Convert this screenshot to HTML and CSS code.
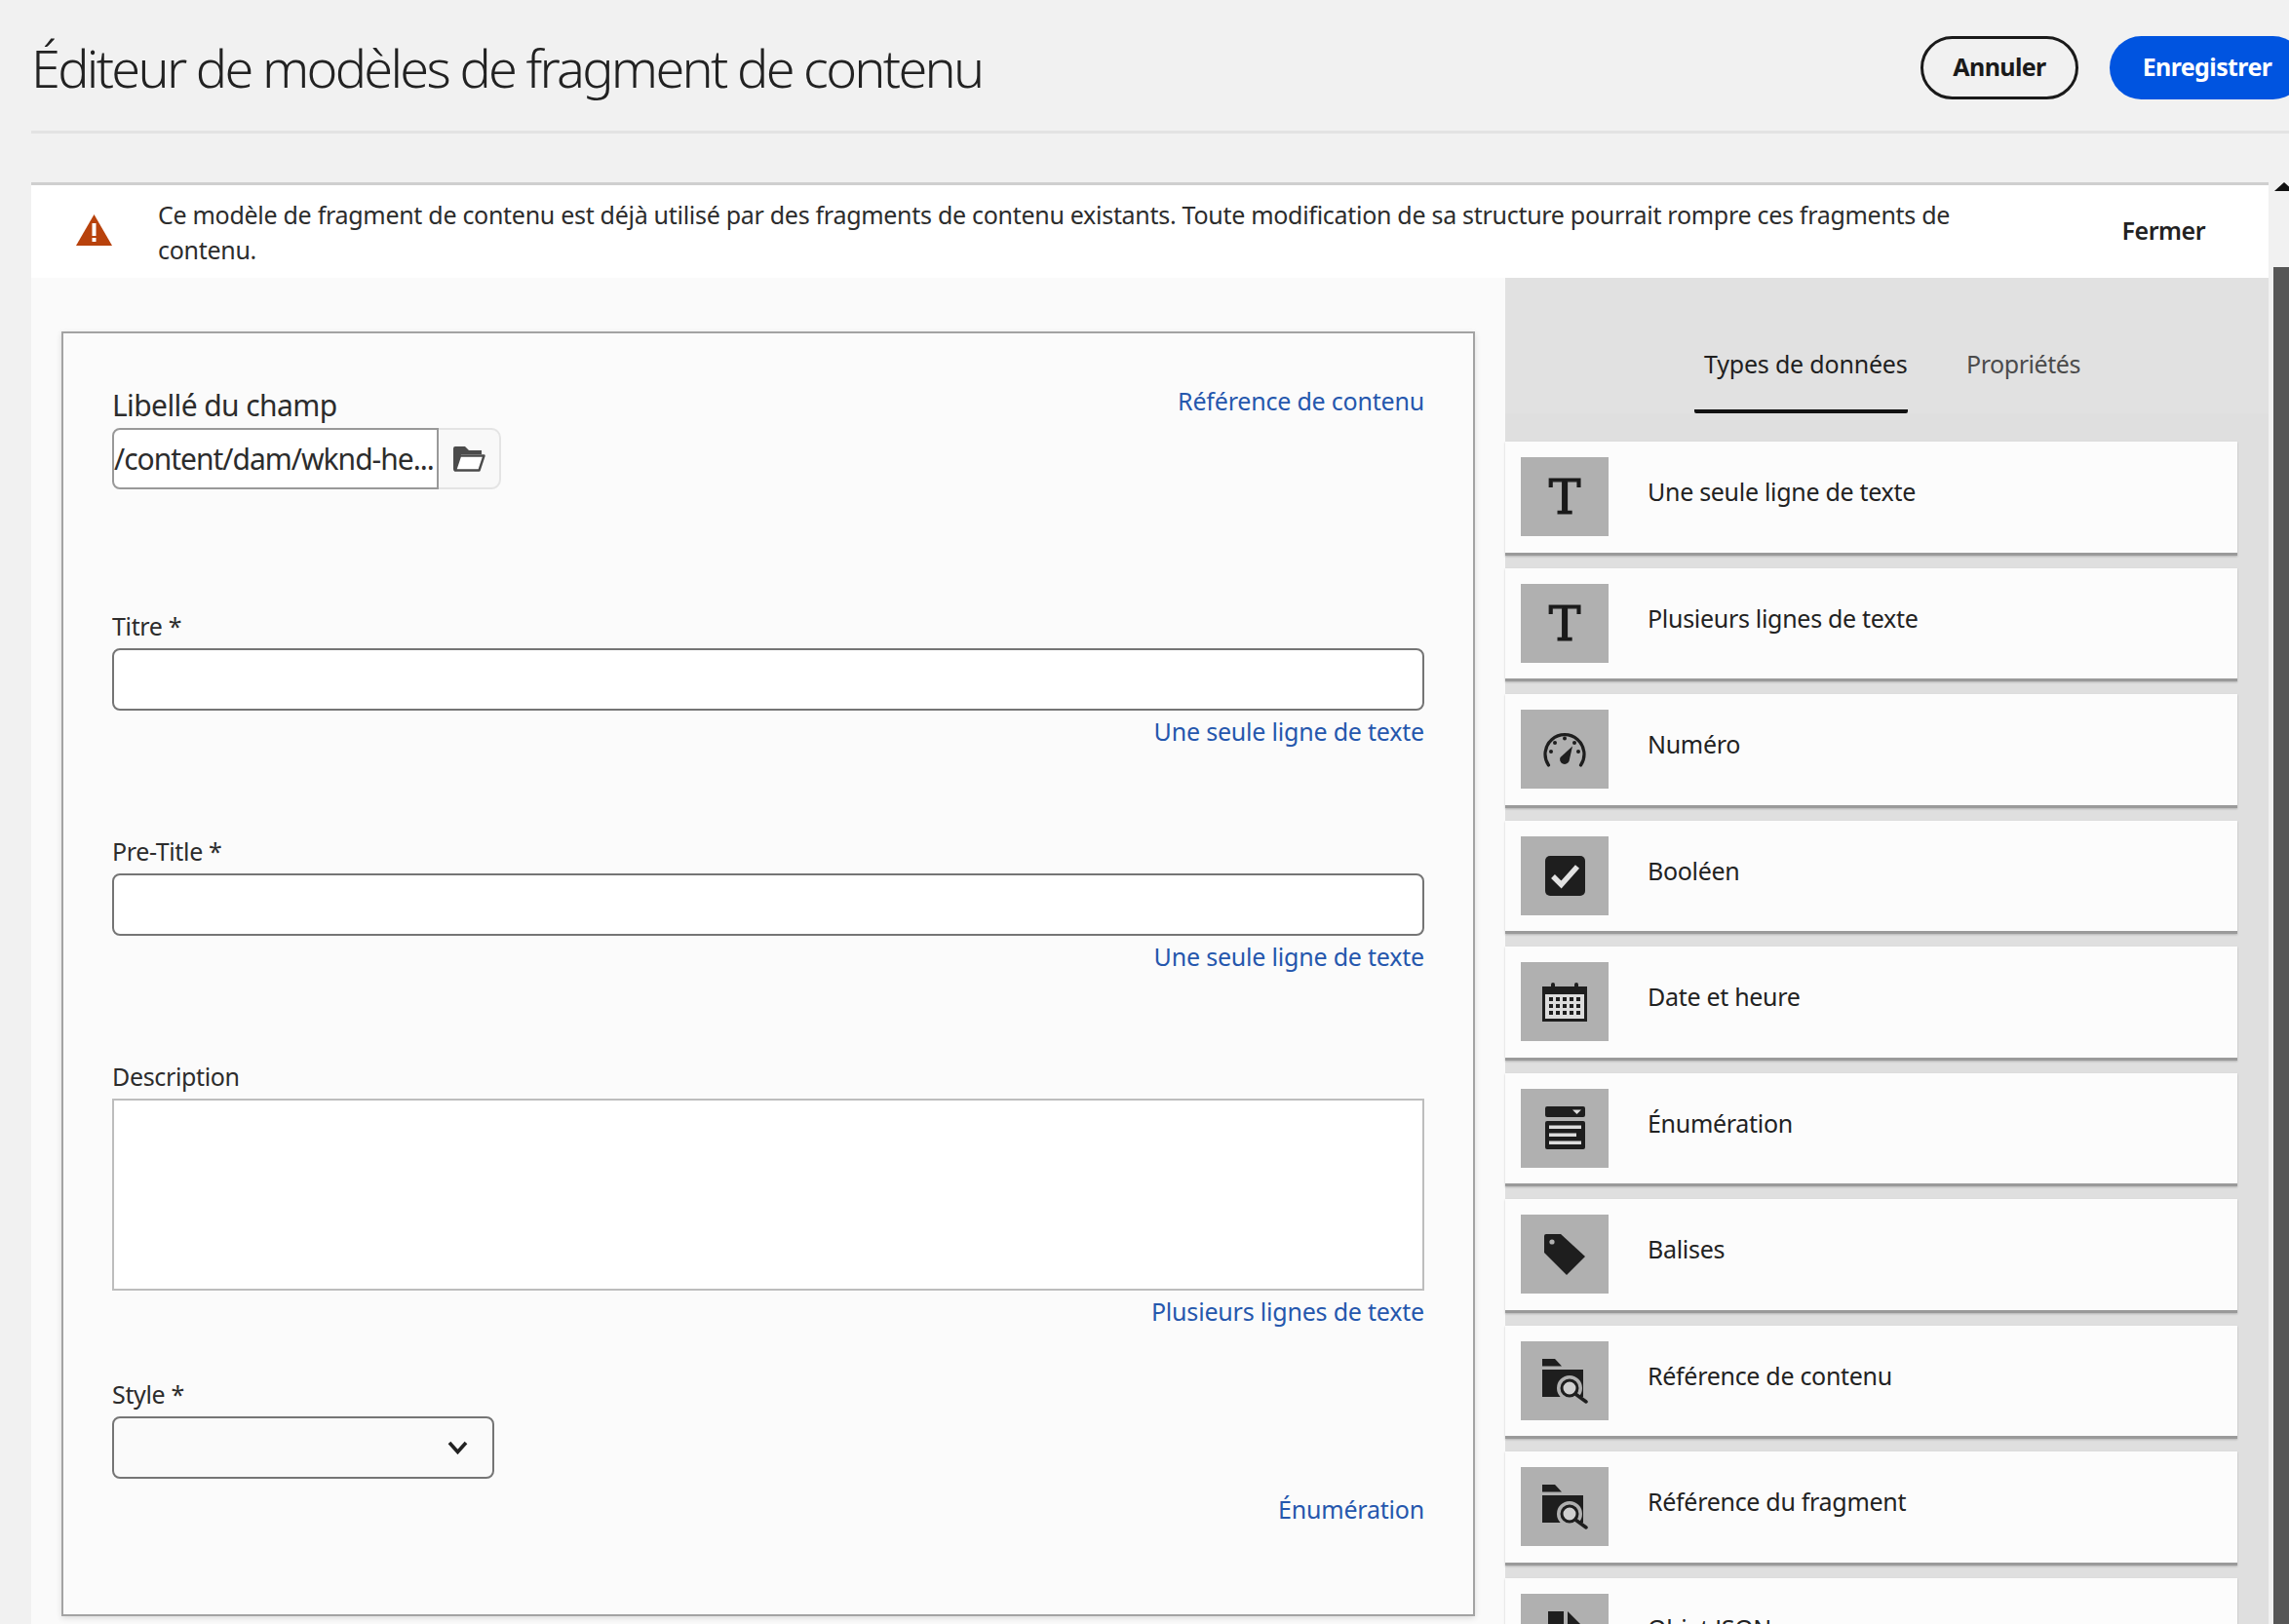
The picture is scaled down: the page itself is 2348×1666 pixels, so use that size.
FILE: index.html
```html
<!DOCTYPE html>
<html lang="fr">
<head>
    <meta charset="UTF-8">
    <meta name="viewport" content="width=device-width, initial-scale=1.0">
    <title>Éditeur de modèles de fragment de contenu</title>
    <link rel="stylesheet" href="styles.css">
</head>
<body>
    <header class="header">
        <h1 class="page-title">Éditeur de modèles de fragment de contenu</h1>
        <button class="btn btn-cancel">Annuler</button>
        <button class="btn btn-save">Enregistrer</button>
    </header>

    <div class="workspace">
        <div class="content">
            <div class="banner">
                <svg class="banner-icon" viewBox="0 0 37 32">
                    <path d="M18.5 0 L37 32 H0 Z" fill="#b8420c"/>
                    <rect x="16.5" y="9" width="4" height="13" fill="#fff"/>
                    <rect x="16.5" y="24" width="4" height="4" fill="#fff"/>
                </svg>
                <p class="banner-text">Ce modèle de fragment de contenu est déjà utilisé par des fragments de contenu existants. Toute modification de sa structure pourrait rompre ces fragments de contenu.</p>
                <span class="banner-close">Fermer</span>
            </div>

            <div class="columns">
                <main class="form-area">
                    <div class="panel">
                        <div class="first-head">
                            <label class="big-label">Libellé du champ</label>
                            <a class="type-link">Référence de contenu</a>
                        </div>
                        <div class="path-row">
                            <div class="path-input">/content/dam/wknd-he...</div>
                            <div class="path-btn">
                                <svg viewBox="0 0 33 26" width="33" height="26">
                                    <path d="M0 2 Q0 0 2 0 H12 L16 4 H29 V8 H8 L4 24 Q2 26 1 25 Q0 25 0 23 Z" fill="#4b4b4b"/>
                                    <path d="M7 9.5 H31.5 L26.5 24.5 H2 Z" fill="#fff" stroke="#4b4b4b" stroke-width="2.4" stroke-linejoin="round"/>
                                </svg>
                            </div>
                        </div>

                        <div class="field field-first">
                            <label class="field-label">Titre *</label>
                            <input class="text-input" type="text">
                            <a class="type-link type-link-below">Une seule ligne de texte</a>
                        </div>
                        <div class="field">
                            <label class="field-label">Pre-Title *</label>
                            <input class="text-input" type="text">
                            <a class="type-link type-link-below">Une seule ligne de texte</a>
                        </div>
                        <div class="field">
                            <label class="field-label">Description</label>
                            <textarea class="text-area"></textarea>
                            <a class="type-link type-link-below">Plusieurs lignes de texte</a>
                        </div>
                        <div class="field field-last">
                            <label class="field-label">Style *</label>
                            <div class="select-box">
                                <svg viewBox="0 0 21 14" width="21" height="14">
                                    <path d="M2 2 L10.5 11.5 L19 2" fill="none" stroke="#222" stroke-width="3.6"/>
                                </svg>
                            </div>
                            <a class="type-link type-link-enum">Énumération</a>
                        </div>
                    </div>
                </main>

                <aside class="sidebar">
                    <div class="tabs">
                        <span class="tab tab-active">Types de données</span>
                        <span class="tab">Propriétés</span>
                    </div>
                    <div class="cards">
                        <div class="card">
                            <div class="card-icon"><span class="glyph-t">T</span></div>
                            <span class="card-label">Une seule ligne de texte</span>
                        </div>
                        <div class="card">
                            <div class="card-icon"><span class="glyph-t">T</span></div>
                            <span class="card-label">Plusieurs lignes de texte</span>
                        </div>
                        <div class="card">
                            <div class="card-icon">
                                <svg viewBox="0 0 46 38" width="46" height="38" fill="#1e1e1e">
                                    <path d="M6.5 35 A20 20 0 1 1 39.5 35" fill="none" stroke="#1e1e1e" stroke-width="3.2" stroke-linecap="round"/>
                                    <circle cx="9" cy="21" r="2"/>
                                    <circle cx="13" cy="12" r="2"/>
                                    <circle cx="23" cy="7.5" r="2"/>
                                    <circle cx="33" cy="12" r="2"/>
                                    <circle cx="37" cy="21" r="2"/>
                                    <path d="M18.5 27 L31 15.5 L27.5 31 A4.8 4.8 0 0 1 18.5 27 Z"/>
                                </svg>
                            </div>
                            <span class="card-label">Numéro</span>
                        </div>
                        <div class="card">
                            <div class="card-icon">
                                <svg viewBox="0 0 41 41" width="41" height="41">
                                    <rect width="41" height="41" rx="5" fill="#1e1e1e"/>
                                    <path d="M8 21 L16.5 29.5 L33 11" fill="none" stroke="#e2e2e2" stroke-width="5.5"/>
                                </svg>
                            </div>
                            <span class="card-label">Booléen</span>
                        </div>
                        <div class="card">
                            <div class="card-icon">
                                <svg viewBox="0 0 46 40" width="46" height="40" fill="#1e1e1e">
                                    <rect x="1.5" y="5.5" width="43" height="33" fill="#dcdcdc" stroke="#1e1e1e" stroke-width="3"/>
                                    <rect x="1" y="5" width="44" height="7"/>
                                    <rect x="9" y="0" width="4" height="9" rx="2"/>
                                    <rect x="33" y="0" width="4" height="9" rx="2"/>
                                    <g>
                                        <rect x="7" y="15" width="4" height="4"/><rect x="14" y="15" width="4" height="4"/><rect x="21" y="15" width="4" height="4"/><rect x="28" y="15" width="4" height="4"/><rect x="35" y="15" width="4" height="4"/>
                                        <rect x="7" y="22" width="4" height="4"/><rect x="14" y="22" width="4" height="4"/><rect x="21" y="22" width="4" height="4"/><rect x="28" y="22" width="4" height="4"/><rect x="35" y="22" width="4" height="4"/>
                                        <rect x="7" y="29" width="4" height="4"/><rect x="14" y="29" width="4" height="4"/><rect x="21" y="29" width="4" height="4"/><rect x="28" y="29" width="4" height="4"/><rect x="35" y="29" width="4" height="4"/>
                                    </g>
                                </svg>
                            </div>
                            <span class="card-label">Date et heure</span>
                        </div>
                        <div class="card">
                            <div class="card-icon">
                                <svg viewBox="0 0 41 44" width="41" height="44">
                                    <rect width="41" height="11" rx="2" fill="#1e1e1e"/>
                                    <path d="M28 3.5 H37 L32.5 8 Z" fill="#dcdcdc"/>
                                    <rect y="15" width="41" height="29" rx="2" fill="#1e1e1e"/>
                                    <rect x="4" y="19.5" width="33" height="3.5" fill="#dcdcdc"/>
                                    <rect x="4" y="27.5" width="28" height="3.5" fill="#dcdcdc"/>
                                    <rect x="4" y="35.5" width="33" height="3.5" fill="#dcdcdc"/>
                                </svg>
                            </div>
                            <span class="card-label">Énumération</span>
                        </div>
                        <div class="card">
                            <div class="card-icon">
                                <svg viewBox="0 0 42 42" width="42" height="42">
                                    <path d="M2 0 H17 L42 23 L23 42 L0 19 V2 Q0 0 2 0 Z" fill="#1e1e1e"/>
                                    <circle cx="8" cy="8" r="2.6" fill="#b0b0b0"/>
                                </svg>
                            </div>
                            <span class="card-label">Balises</span>
                        </div>
                        <div class="card">
                            <div class="card-icon">
                                <svg viewBox="0 0 47 47" width="47" height="47">
                                    <path d="M0 1 H13 L20 8.5 H0 Z" fill="#1e1e1e"/>
                                    <path d="M0 12 H42 V40 H0 Z" fill="#1e1e1e"/>
                                    <circle cx="28" cy="31" r="9" fill="#cfcfcf" stroke="#b0b0b0" stroke-width="8"/>
                                    <circle cx="28" cy="31" r="8" fill="#cfcfcf" stroke="#1e1e1e" stroke-width="3"/>
                                    <path d="M34 37 L45 45" stroke="#1e1e1e" stroke-width="3.5" stroke-linecap="round"/>
                                </svg>
                            </div>
                            <span class="card-label">Référence de contenu</span>
                        </div>
                        <div class="card">
                            <div class="card-icon">
                                <svg viewBox="0 0 47 47" width="47" height="47">
                                    <path d="M0 1 H13 L20 8.5 H0 Z" fill="#1e1e1e"/>
                                    <path d="M0 12 H42 V40 H0 Z" fill="#1e1e1e"/>
                                    <circle cx="28" cy="31" r="9" fill="#cfcfcf" stroke="#b0b0b0" stroke-width="8"/>
                                    <circle cx="28" cy="31" r="8" fill="#cfcfcf" stroke="#1e1e1e" stroke-width="3"/>
                                    <path d="M34 37 L45 45" stroke="#1e1e1e" stroke-width="3.5" stroke-linecap="round"/>
                                </svg>
                            </div>
                            <span class="card-label">Référence du fragment</span>
                        </div>
                        <div class="card">
                            <div class="card-icon">
                                <svg viewBox="0 0 34 44" width="34" height="44">
                                    <path d="M0 0 H16 V44 H0 Z" fill="#1e1e1e"/>
                                    <path d="M20 0 L34 14 H20 Z" fill="#1e1e1e"/>
                                    <path d="M20 18 H34 V44 H20 Z" fill="#1e1e1e"/>
                                </svg>
                            </div>
                            <span class="card-label">Objet JSON</span>
                        </div>
                    </div>
                </aside>
            </div>
        </div>

        <div class="scrollbar">
            <div class="scroll-arrow"></div>
            <div class="scroll-thumb"></div>
        </div>
    </div>
</body>
</html>
```

FILE: styles.css
```css
* { box-sizing: border-box; }
html, body { height: 100%; }
body { margin: 0; height: 1666px; overflow: hidden; background: #f1f1f1; font-family: "Noto Sans", sans-serif; color: #2c2c2c; }

.header { display: flex; align-items: center; height: 137px; margin-left: 32px; padding-top: 4px; border-bottom: 3px solid #e3e3e3; }
.page-title { flex: 1; margin: 0; font-size: 54px; font-weight: 300; letter-spacing: -2.7px; color: #222; }
.btn { flex: none; height: 65px; padding-bottom: 3px; border-radius: 33px; font-family: inherit; font-size: 25px; font-weight: 700; letter-spacing: -0.6px; }
.btn-cancel { width: 162px; margin-right: 32px; background: transparent; border: 3.5px solid #1a1a1a; color: #1a1a1a; }
.btn-save { width: 200px; margin-right: -16px; padding-left: 0; padding-right: 0; background: #0054e0; border: none; color: #fff; }

.workspace { display: flex; height: 1529px; margin-top: 50px; margin-left: 32px; }
.content { width: 2295px; flex: none; display: flex; flex-direction: column; }

.banner { display: flex; height: 98px; padding: 12px 65px 0 46px; background: #fff; border-top: 3px solid #cfcfcf; }
.banner-icon { flex: none; width: 37px; height: 32px; margin-top: 18px; }
.banner-text { width: 1860px; flex: none; margin: 0 0 0 47px; font-size: 25px; line-height: 36px; letter-spacing: -0.29px; color: #2c2c2c; }
.banner-close { margin: 16px 0 0 auto; font-size: 25px; font-weight: 600; letter-spacing: -0.5px; color: #222; line-height: 36px; }

.columns { flex: 1; display: flex; min-height: 0; }
.form-area { width: 1512px; flex: none; padding: 55px 0 0 31px; background: #fafafa; }
.panel { width: 1450px; height: 1318px; padding: 56px 50px 0; background: #fbfbfb; border: 2px solid #a3a3a3; box-shadow: 0 2px 6px rgba(0,0,0,.12); }

.first-head { display: flex; justify-content: space-between; height: 43px; margin-top: -2px; }
.first-head .type-link { margin-top: -2px; }
.big-label { font-size: 30px; letter-spacing: -0.6px; line-height: 40px; }
.type-link { display: block; font-size: 25px; letter-spacing: -0.2px; line-height: 34px; color: #2557ad; }
.type-link-below { margin-top: 4px; text-align: right; }
.type-link-enum { margin-top: 14px; text-align: right; }

.path-row { display: flex; height: 63px; }
.path-input { width: 335px; padding-left: 0; background: #fff; border: 2px solid #999; border-radius: 8px 0 0 8px; font-size: 30px; letter-spacing: -1px; line-height: 60px; white-space: nowrap; overflow: hidden; }
.path-btn { width: 64px; display: flex; align-items: center; justify-content: center; background: #f8f8f8; border: 2px solid #e4e4e4; border-left: none; border-radius: 0 10px 10px 0; }

.field { margin-top: 89px; }
.field-first { margin-top: 123px; }
.field-last { margin-top: 51px; }
.field-label { display: block; margin-bottom: 6px; font-size: 25px; letter-spacing: -0.35px; line-height: 34px; }
.text-input { display: block; width: 100%; height: 64px; background: #fff; border: 2px solid #757575; border-radius: 8px; }
.text-area { display: block; width: 100%; height: 197px; background: #fff; border: 2px solid #bdbdbd; border-radius: 0; resize: none; }
.select-box { display: flex; align-items: center; justify-content: flex-end; width: 392px; height: 64px; padding: 0 25px 0 0; background: #fafafa; border: 2px solid #757575; border-radius: 8px; }

.sidebar { flex: 1; background: #dfdfdf; }
.tabs { display: flex; height: 139px; padding: 70px 0 0 194px; background: #e1e1e1; }
.tab { height: 69px; font-size: 25px; letter-spacing: -0.45px; line-height: 36px; color: #4b4b4b; }
.tab-active { width: 219px; margin-right: 60px; padding-left: 10px; letter-spacing: -0.2px; color: #1f1f1f; border-bottom: 4px solid #111; border-radius: 0 0 2px 2px; }

.cards { display: flex; flex-direction: column; gap: 13px; width: 751px; padding-top: 29px; }
.card { display: flex; flex: none; height: 116.5px; padding: 16px 0 0 16px; background: #fcfcfc; border-bottom: 3px solid #9a9a9a; box-shadow: 0 1px 2px rgba(0,0,0,.2); }
.card-icon { display: flex; flex: none; align-items: center; justify-content: center; width: 90px; height: 81px; background: #b0b0b0; overflow: hidden; }
.card-label { margin: 17px 0 0 40px; font-size: 25px; letter-spacing: -0.3px; line-height: 36px; color: #222; }
.glyph-t { padding-top: 2px; font-family: "DejaVu Serif", serif; font-size: 49px; line-height: 1; color: #1a1a1a; -webkit-text-stroke: 1.2px #1a1a1a; }

.scrollbar { flex: 1; padding-left: 5px; background: #f1f1f1; }
.scroll-arrow { height: 87px; }
.scroll-arrow::before { content: ""; display: block; width: 0; margin-left: 1px; border-left: 10px solid transparent; border-right: 10px solid transparent; border-bottom: 9px solid #111; }
.scroll-thumb { height: 1500px; background: #565656; }
```
